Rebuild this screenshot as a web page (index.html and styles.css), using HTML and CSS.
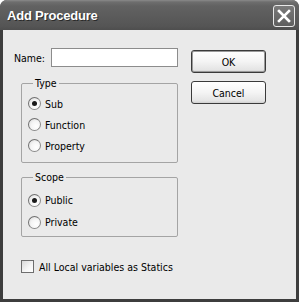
FILE: index.html
```html
<!DOCTYPE html>
<html>
<head>
<meta charset="utf-8">
<link rel="stylesheet" href="styles.css">
</head>
<body>
<div class="window">
  <div class="titlebar">
    <span class="title">Add Procedure</span>
    <span class="close"><svg width="14" height="14" viewBox="0 0 14 14"><path d="M2 2 L12 12 M12 2 L2 12" stroke="#fff" stroke-width="2.6" stroke-linecap="square"/></svg></span>
  </div>
  <div class="client">
    <div class="main">
      <div class="name-row">
        <label class="name-label">Name:</label>
        <span class="textbox"></span>
      </div>
      <fieldset class="group group-type">
        <legend>Type</legend>
        <div class="opt"><span class="radio checked"></span><span>Sub</span></div>
        <div class="opt"><span class="radio"></span><span>Function</span></div>
        <div class="opt"><span class="radio"></span><span>Property</span></div>
      </fieldset>
      <fieldset class="group group-scope">
        <legend>Scope</legend>
        <div class="opt"><span class="radio checked"></span><span>Public</span></div>
        <div class="opt"><span class="radio"></span><span>Private</span></div>
      </fieldset>
      <div class="check-row"><span class="checkbox"></span><span>All Local variables as Statics</span></div>
    </div>
    <div class="buttons">
      <div class="btn default">OK</div>
      <div class="btn">Cancel</div>
    </div>
  </div>
</div>
</body>
</html>
```
FILE: styles.css
```css
html, body {
  margin: 0;
  padding: 0;
  background: #ffffff;
}
body {
  font-family: "DejaVu Sans Condensed", "DejaVu Sans", sans-serif;
  font-size: 10.5px;
  color: #000;
}
.window {
  width: 299px;
  height: 302px;
  box-sizing: border-box;
  display: flex;
  flex-direction: column;
  background: #3d3d3d;
  border-radius: 7px 7px 0 0;
  overflow: hidden;
}
.titlebar {
  height: 30px;
  flex: none;
  display: flex;
  align-items: center;
  padding: 0 4px 0 7px;
  background: linear-gradient(to bottom, #8a8a8a 0px, #6e6e6e 2px, #626262 6px, #5a5a5a 18px, #555555 26px, #4e4e4e 30px);
}
.title {
  flex: 1;
  color: #fff;
  font-family: "Liberation Sans", Arial, sans-serif;
  font-weight: bold;
  font-size: 13px;
  letter-spacing: -0.2px;
  text-shadow: 1px 1px 0 #2a2a2a;
  padding-top: 1px;
}
.close {
  width: 20px;
  height: 20px;
  border: 1px solid #e8e8e8;
  border-radius: 3px;
  background: linear-gradient(to bottom, #7a7a7a, #5e5e5e);
  display: flex;
  align-items: center;
  justify-content: center;
  margin-top: 1px;
}
.client {
  flex: 1;
  margin: 0 3px 3px 3px;
  background: #eaeaea;
  display: flex;
  padding: 18px 0 0 11px;
}
.main {
  width: 164px;
  display: flex;
  flex-direction: column;
}
.name-row {
  display: flex;
  align-items: center;
  height: 19px;
}
.name-label {
  width: 37px;
}
.textbox {
  width: 125px;
  height: 17px;
  border: 1px solid #8c8c8c;
  background: #fff;
}
.group {
  margin: 10px 0 0 7px;
  width: 157px;
  box-sizing: border-box;
  border: 1px solid #a4a4a4;
  border-radius: 2px;
  display: flex;
  flex-direction: column;
  min-width: 0;
}
.group legend {
  padding: 0 2px;
  margin-left: 5px;
  line-height: 13px;
}
.group-type {
  padding: 3px 0 6px 6px;
}
.group-type .opt {
  height: 21px;
}
.group-scope {
  margin-top: 8px;
  padding: 5px 0 3px 6px;
}
.group-scope .opt {
  height: 22px;
}
.opt {
  display: flex;
  align-items: center;
  gap: 4px;
}
.radio {
  width: 11px;
  height: 11px;
  border-radius: 50%;
  border: 1px solid #8a8a8a;
  border-top-color: #707070;
  border-left-color: #707070;
  background: radial-gradient(circle at 65% 65%, #ffffff 0%, #f4f4f4 50%, #d4d4d4 100%);
  display: flex;
  align-items: center;
  justify-content: center;
  flex: none;
}
.radio.checked::after {
  content: "";
  width: 5px;
  height: 5px;
  border-radius: 50%;
  background: #1a1a1a;
}
.check-row {
  display: flex;
  align-items: center;
  gap: 5px;
  margin: 23px 0 0 7px;
  height: 13px;
  white-space: nowrap;
}
.checkbox {
  width: 11px;
  height: 11px;
  border: 1px solid #6e6e6e;
  background: linear-gradient(135deg, #d8d8d8, #f6f6f6 60%, #ffffff);
  flex: none;
}
.buttons {
  margin: 2px 0 0 13px;
  display: flex;
  flex-direction: column;
  gap: 8px;
}
.btn {
  width: 75px;
  height: 23px;
  box-sizing: border-box;
  border: 1px solid #3a3a3a;
  border-radius: 3px;
  background: linear-gradient(to bottom, #ffffff 0%, #f4f4f4 50%, #e4e4e4 90%, #cfcfcf 100%);
  display: flex;
  align-items: center;
  justify-content: center;
}
.btn.default {
  box-shadow: inset 0 0 0 1px #9a9a9a;
}
```
